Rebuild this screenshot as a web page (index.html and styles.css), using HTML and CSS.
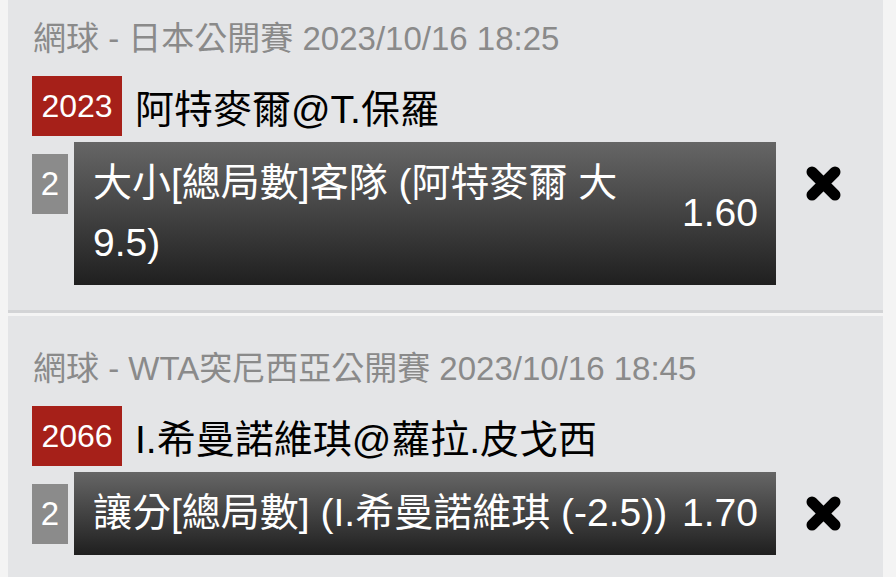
FILE: index.html
```html
<!DOCTYPE html>
<html lang="zh-Hant">
<head>
<meta charset="utf-8">
<title>Bet slip</title>
<link rel="stylesheet" href="styles.css">
</head>
<body>
<div class="list">
  <section class="panel">
    <div class="league">網球 - 日本公開賽 2023/10/16 18:25</div>
    <div class="match">
      <span class="code">2023</span>
      <span class="teams">阿特麥爾@T.保羅</span>
    </div>
    <div class="bet">
      <span class="num">2</span>
      <div class="sel">
        <span class="desc">大小[總局數]客隊 (阿特麥爾 大 9.5)</span>
        <span class="odds">1.60</span>
      </div>
      <span class="remove"><svg viewBox="0 0 37 37" width="37" height="37"><path d="M7 7 L30 30 M30 7 L7 30" stroke="#000" stroke-width="11" stroke-linecap="round"/></svg></span>
    </div>
  </section>
  <section class="panel">
    <div class="league">網球 - WTA突尼西亞公開賽 2023/10/16 18:45</div>
    <div class="match">
      <span class="code">2066</span>
      <span class="teams">I.希曼諾維琪@蘿拉.皮戈西</span>
    </div>
    <div class="bet">
      <span class="num">2</span>
      <div class="sel">
        <span class="desc">讓分[總局數] (I.希曼諾維琪 (-2.5))</span>
        <span class="odds">1.70</span>
      </div>
      <span class="remove"><svg viewBox="0 0 37 37" width="37" height="37"><path d="M7 7 L30 30 M30 7 L7 30" stroke="#000" stroke-width="11" stroke-linecap="round"/></svg></span>
    </div>
  </section>
</div>
</body>
</html>
```
FILE: styles.css
```css
html, body {
  margin: 0;
  padding: 0;
  background: #f4f4f4;
  overflow: hidden;
}
body {
  font-family: "Liberation Sans", "Noto Sans CJK TC", sans-serif;
  height: 577px;
}
.list {
  margin-top: -14px;
  padding-left: 8px;
  display: flex;
  flex-direction: column;
  gap: 3px;
}
.panel {
  width: 875px;
  box-sizing: border-box;
  background: #e4e5e7;
  border-bottom: 3px solid #d3d4d6;
  padding: 33px 0 25px 24px;
}
.league {
  font-size: 33px;
  line-height: 40px;
  color: #8a8a8a;
  margin-left: 1px;
  white-space: nowrap;
}
.match {
  display: flex;
  align-items: center;
  margin-top: 17px;
  height: 60px;
}
.code {
  background: #a62019;
  color: #fff;
  font-size: 32px;
  height: 60px;
  width: 90px;
  line-height: 60px;
  text-align: center;
}
.teams {
  margin-left: 13px;
  font-size: 39px;
  color: #000;
  white-space: nowrap;
}
.bet {
  display: flex;
  align-items: flex-start;
  margin-top: 6px;
}
.num {
  margin-top: 12px;
  width: 36px;
  height: 60px;
  background: #8b8b8b;
  color: #fff;
  font-size: 33px;
  line-height: 60px;
  text-align: center;
}
.sel {
  margin-left: 6px;
  width: 702px;
  box-sizing: border-box;
  display: flex;
  align-items: center;
  padding: 11px 18px 12px 19px;
  background: linear-gradient(#666666, #1f1f1f);
  color: #fff;
  font-size: 39px;
  line-height: 60px;
}
.desc {
  flex: 1 1 auto;
  min-width: 0;
}
.odds {
  flex: 0 0 auto;
  margin-left: 10px;
}
.remove {
  margin-left: 29px;
  margin-top: 23px;
  width: 37px;
  height: 37px;
  display: block;
}
.remove svg {
  display: block;
}
```
